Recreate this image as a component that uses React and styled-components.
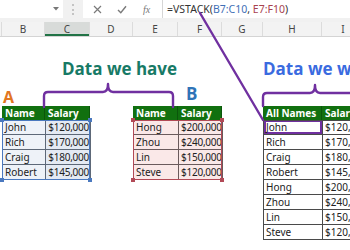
import styled, { createGlobalStyle, css } from 'styled-components';

const COLS = '2px 43px 45px 43px 45px 44px 41px 59px 43px';
const LETTERS = ['', 'B', 'C', 'D', 'E', 'F', 'G', 'H', 'I'];

const groupA = [
  ['John', '$120,000'],
  ['Rich', '$170,000'],
  ['Craig', '$180,000'],
  ['Robert', '$145,000'],
];

const groupB = [
  ['Hong', '$200,000'],
  ['Zhou', '$240,000'],
  ['Lin', '$150,000'],
  ['Steve', '$120,000'],
];

const GlobalStyle = createGlobalStyle`
  html, body {
    margin: 0;
    padding: 0;
    background: #fff;
  }
  body {
    font-family: "Noto Sans", "Open Sans", sans-serif;
  }
`;

const Page = styled.div`
  position: relative;
  width: 350px;
  height: 250px;
  overflow: hidden;
  background: #fff;
`;

/* formula bar */
const TopBar = styled.div`
  display: flex;
  align-items: flex-start;
  height: 22px;
  background: #f1f1f1;
`;

const NameBox = styled.div`
  width: 63px;
  height: 18px;
  box-sizing: border-box;
  background: #fff;
  display: flex;
  align-items: center;
  justify-content: flex-end;
  padding-right: 4px;
`;

const Grip = styled.div`
  width: 20px;
  height: 18px;
  display: flex;
  justify-content: center;
  align-items: center;
  &::before {
    content: '';
    width: 0;
    height: 11px;
    border-left: 2px dotted #c4c4c4;
  }
`;

const FxButtons = styled.div`
  width: 80px;
  height: 18px;
  box-sizing: border-box;
  background: #fff;
  border-right: 1px solid #d6d6d6;
  display: flex;
  align-items: center;
  justify-content: space-around;
  padding: 0 4px 0 2px;
`;

const FxLabel = styled.span`
  font: italic 10px "Liberation Serif", serif;
  color: #777;
`;

const FormulaInput = styled.div`
  flex: 1;
  height: 18px;
  background: #fff;
  padding-left: 4px;
  font-size: 10.5px;
  line-height: 18px;
  color: #333;
  white-space: nowrap;
  overflow: hidden;
`;

const Ref = styled.span`
  color: ${(p) => p.$color};
`;

/* column headers */
const ColHeaderRow = styled.div`
  display: grid;
  grid-template-columns: ${COLS};
  height: 15px;
  box-sizing: border-box;
  background: #f3f3f3;
  border-bottom: 1px solid #d4d4d4;
`;

const ColHead = styled.div`
  display: flex;
  align-items: center;
  justify-content: center;
  font-size: 10px;
  color: #454545;
  border-right: 1px solid #dcdcdc;
  ${(p) =>
    p.$active &&
    css`
      background: #d8dbd9;
      box-shadow: inset 0 -2px 0 #217346;
    `}
`;

/* sheet */
const Sheet = styled.div`
  display: grid;
  grid-template-columns: ${COLS};
  grid-template-rows: 45px 24px auto;
`;

const Title = styled.div`
  grid-column: ${(p) => p.$col};
  grid-row: 1;
  margin-top: 22px;
  padding-left: ${(p) => p.$pad}px;
  font: 700 17px/20px "Open Sans", sans-serif;
  color: ${(p) => p.$color};
  white-space: nowrap;
`;

const Letter = styled.div`
  grid-column: ${(p) => p.$col};
  grid-row: 2;
  margin-top: ${(p) => p.$top}px;
  padding-left: ${(p) => p.$pad}px;
  font: 700 ${(p) => p.$size}px/20px "Open Sans", sans-serif;
  color: ${(p) => p.$color};
`;

const Table = styled.div`
  grid-column: ${(p) => p.$col};
  grid-row: 3;
  display: grid;
  grid-template-columns: ${(p) => p.$widths};
  align-self: start;
`;

const HeadCell = styled.div`
  height: 14px;
  box-sizing: border-box;
  background: #11700f;
  color: #fff;
  font-weight: 700;
  font-size: 10px;
  line-height: 14px;
  padding-left: 3px;
  white-space: nowrap;
  overflow: hidden;
  border-right: 1px solid #0b560b;
`;

const DataBlock = styled.div`
  grid-column: 1 / -1;
  position: relative;
  display: grid;
  grid-template-columns: inherit;
  border-left: 1px solid ${(p) => p.$line};
  &::after {
    content: '';
    position: absolute;
    inset: 0 0 0 -1px;
    border: 1px solid ${(p) => p.$frame};
    pointer-events: none;
  }
`;

const Cell = styled.div`
  position: relative;
  height: 15px;
  box-sizing: border-box;
  padding: 0 1px 0 2px;
  font-size: 10px;
  letter-spacing: ${(p) => (p.$num ? '-0.25px' : '0')};
  line-height: 14px;
  color: #222;
  white-space: nowrap;
  overflow: hidden;
  text-align: ${(p) => (p.$num ? 'right' : 'left')};
  background: ${(p) => p.$bg};
  border-right: 1px solid ${(p) => p.$line};
  border-bottom: 1px solid ${(p) => p.$line};
  ${(p) =>
    p.$picked &&
    css`
      box-shadow: inset 0 0 0 2px #7030a0;
    `}
`;

const Handle = styled.span`
  position: absolute;
  width: 4px;
  height: 4px;
  background: ${(p) => p.$color};
  ${(p) => (p.$top ? 'top: -2px;' : 'bottom: -2px;')}
  ${(p) => (p.$left ? 'left: -3px;' : 'right: -2px;')}
  z-index: 2;
`;

const Overlay = styled.svg`
  position: absolute;
  left: 0;
  top: 0;
  pointer-events: none;
`;

const RangeTable = ({ col, widths, rows, line, frame, bgs }) => (
  <Table $col={col} $widths={widths}>
    <HeadCell>Name</HeadCell>
    <HeadCell>Salary</HeadCell>
    <DataBlock $line={line} $frame={frame}>
      {rows.map(([name, pay]) => [
        <Cell key={name} $bg={bgs[0]} $line={line}>
          {name}
        </Cell>,
        <Cell key={name + pay} $num $bg={bgs[1]} $line={line}>
          {pay}
        </Cell>,
      ])}
      <Handle $color={frame} $top $left />
      <Handle $color={frame} $top />
      <Handle $color={frame} $left />
      <Handle $color={frame} />
    </DataBlock>
  </Table>
);

export default function App() {
  const all = [...groupA, ...groupB];
  return (
    <Page>
      <GlobalStyle />
      <TopBar>
        <NameBox>
          <svg width="6" height="4" viewBox="0 0 6 4">
            <path d="M0 0 H6 L3 3.5 Z" fill="#777" />
          </svg>
        </NameBox>
        <Grip />
        <FxButtons>
          <svg width="9" height="9" viewBox="0 0 9 9">
            <path d="M1 1 L8 8 M8 1 L1 8" stroke="#7a7a7a" strokeWidth="1.2" />
          </svg>
          <svg width="10" height="9" viewBox="0 0 10 9">
            <path d="M1 5 L3.8 7.8 L9 1.2" stroke="#7a7a7a" strokeWidth="1.4" fill="none" />
          </svg>
          <FxLabel>fx</FxLabel>
        </FxButtons>
        <FormulaInput>
          =VSTACK(<Ref $color="#3f6fb6">B7:C10</Ref>, <Ref $color="#a8434f">E7:F10</Ref>)
        </FormulaInput>
      </TopBar>

      <ColHeaderRow>
        {LETTERS.map((l, i) => (
          <ColHead key={i} $active={l === 'C'}>
            {l}
          </ColHead>
        ))}
      </ColHeaderRow>

      <Sheet>
        <Title $col="3 / 7" $pad={17} $color="#177a66">
          Data we have
        </Title>
        <Title $col="8 / 10" $pad={0} $color="#3a6be0">
          Data we want
        </Title>
        <Letter $col="2" $top={5} $pad={1} $size={16} $color="#e2761f">
          A
        </Letter>
        <Letter $col="6" $top={2} $pad={8} $size={17} $color="#2f74b8">
          B
        </Letter>

        <RangeTable
          col="2 / 4"
          widths="43px 45px"
          rows={groupA}
          line="#5d6878"
          frame="#4b79bf"
          bgs={['#eef2f8', '#e4eaf3']}
        />
        <RangeTable
          col="5 / 7"
          widths="45px 44px"
          rows={groupB}
          line="#6a5a5c"
          frame="#b24a57"
          bgs={['#fae8e8', '#fae8e8']}
        />

        <Table $col="8 / 10" $widths="59px 43px">
          <HeadCell>All Names</HeadCell>
          <HeadCell>Salary</HeadCell>
          <DataBlock $line="#4a4a4a" $frame="#4a4a4a">
            {all.map(([name, pay], i) => [
              <Cell key={name + i} $bg="#fff" $line="#4a4a4a" $picked={i === 0}>
                {name}
              </Cell>,
              <Cell key={pay + i} $bg="#fff" $line="#4a4a4a">
                {pay}
              </Cell>,
            ])}
          </DataBlock>
        </Table>
      </Sheet>

      <Overlay width="350" height="250" viewBox="0 0 350 250">
        <g fill="none" stroke="#7030a0" strokeWidth="2.4" strokeLinecap="round" strokeLinejoin="round">
          <path d="M44 107 V96 Q44 92 48 92 H103 Q108 92 108 84 Q108 92 113 92 H169 Q173 92 173 96 V107" />
          <path d="M263 106 V97 Q263 93 267 93 H310 Q315 93 315 85 Q315 93 320 93 H352" />
          <path d="M200 13 L263 120" />
        </g>
      </Overlay>
    </Page>
  );
}
